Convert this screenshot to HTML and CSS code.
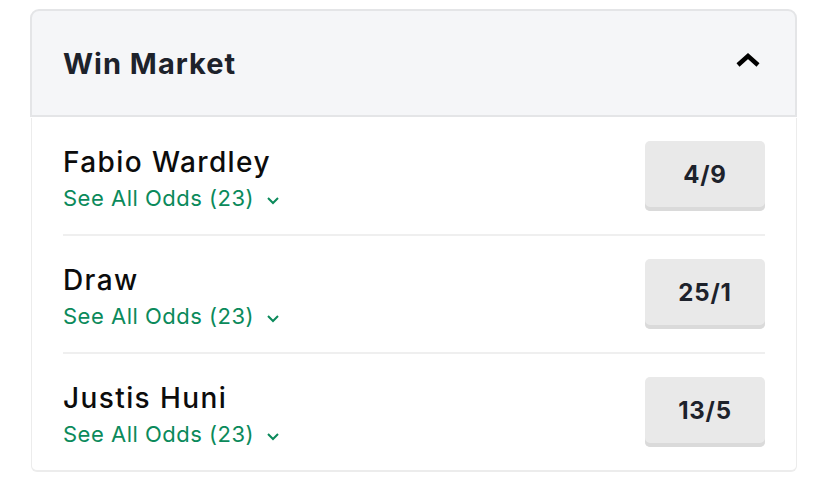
FILE: index.html
```html
<!DOCTYPE html>
<html lang="en">
<head>
  <meta charset="UTF-8">
  <meta name="viewport" content="width=device-width, initial-scale=1.0">
  <title>Win Market</title>
  <link rel="stylesheet" href="styles.css">
</head>
<body>
  <section class="market">
    <header class="market-header">
      <h2>Win Market</h2>
      <svg class="toggle" width="26" height="16" viewBox="0 0 26 16">
        <path d="M3 13 L13 4 L23 13" fill="none" stroke="#000" stroke-width="4.5" stroke-linejoin="miter"/>
      </svg>
    </header>

    <div class="market-body">
      <div class="runner">
        <div class="runner-info">
          <div class="runner-name">Fabio Wardley</div>
          <a class="see-all" href="#">See All Odds (23)
            <svg width="14" height="9" viewBox="0 0 14 9"><path d="M2 2 L7 7 L12 2" fill="none" stroke="currentColor" stroke-width="2"/></svg>
          </a>
        </div>
        <button class="odds">4/9</button>
      </div>

      <div class="runner">
        <div class="runner-info">
          <div class="runner-name">Draw</div>
          <a class="see-all" href="#">See All Odds (23)
            <svg width="14" height="9" viewBox="0 0 14 9"><path d="M2 2 L7 7 L12 2" fill="none" stroke="currentColor" stroke-width="2"/></svg>
          </a>
        </div>
        <button class="odds">25/1</button>
      </div>

      <div class="runner">
        <div class="runner-info">
          <div class="runner-name">Justis Huni</div>
          <a class="see-all" href="#">See All Odds (23)
            <svg width="14" height="9" viewBox="0 0 14 9"><path d="M2 2 L7 7 L12 2" fill="none" stroke="currentColor" stroke-width="2"/></svg>
          </a>
        </div>
        <button class="odds">13/5</button>
      </div>
    </div>
  </section>
</body>
</html>
```

FILE: styles.css
```css
body {
  margin: 0;
  background-color: #fff;
  font-family: Inter, "Liberation Sans", sans-serif;
  color: #111;
}

.market {
  width: 767px;
  margin: 9px 0 0 30px;
}

.market-header {
  display: flex;
  align-items: center;
  justify-content: space-between;
  height: 104px;
  padding: 0 34px 0 31px;
  background-color: #f5f6f8;
  border: 2px solid #e4e5e7;
  border-radius: 9px 9px 0 0;
}

.market-header h2 {
  margin: 0;
  font-size: 29px;
  font-weight: 700;
  color: #1d222b;
  letter-spacing: 1px;
}

.toggle {
  margin-top: -6px;
}

.market-body {
  margin: 1px 0 0 1px;
  padding: 0 31px;
  border-left: 1px solid #ececec;
  border-right: 1px solid #ececec;
  border-bottom: 2px solid #ececec;
  border-radius: 0 0 6px 6px;
}

.runner {
  display: flex;
  align-items: flex-start;
  justify-content: space-between;
  padding: 23px 0;
  border-bottom: 2px solid #efefef;
}

.runner:last-child {
  border-bottom: none;
}

.runner-info {
  display: flex;
  flex-direction: column;
  padding-top: 4px;
}

.runner-name {
  font-size: 28px;
  font-weight: 500;
  line-height: 34px;
  letter-spacing: 1.4px;
  color: #0c0c0c;
}

.see-all {
  display: flex;
  align-items: center;
  gap: 12px;
  margin-top: 6px;
  font-size: 22px;
  line-height: 26px;
  letter-spacing: 0.5px;
  color: #0b8a5b;
  text-decoration: none;
}

.see-all svg {
  margin-top: 5px;
}

.odds {
  width: 120px;
  height: 70px;
  padding: 0 0 4px;
  font-family: Inter, sans-serif;
  font-size: 24px;
  font-weight: 700;
  color: #1d222b;
  letter-spacing: 0.8px;
  background-color: #e9e9e9;
  border: none;
  border-radius: 5px;
  box-shadow: inset 0 -4px 0 #dadada;
}
```
